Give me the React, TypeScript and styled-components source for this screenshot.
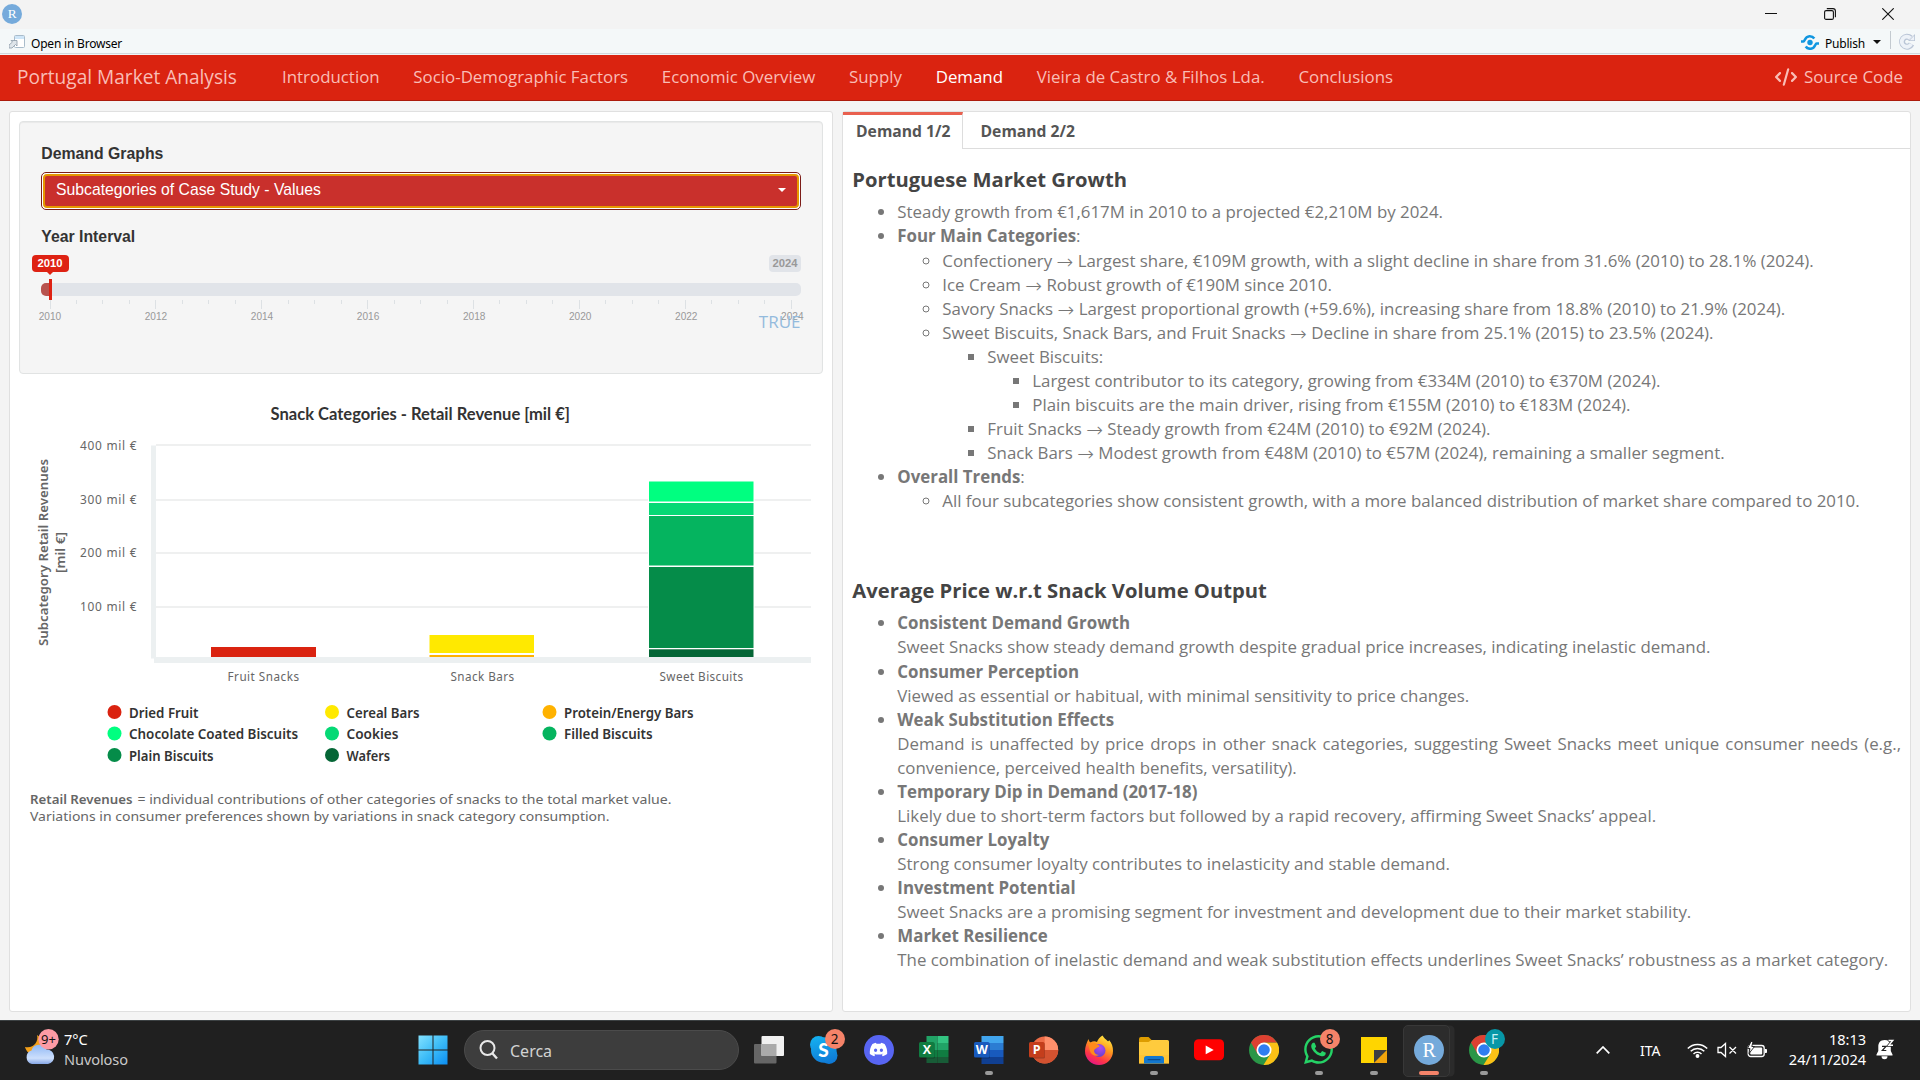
import React from "react";
import styled, { createGlobalStyle } from "styled-components";
import { FaCode, FaDiscord, FaWhatsapp } from "react-icons/fa6";

const sans = `"Open Sans", "Liberation Sans", sans-serif`;
const arial = `"Liberation Sans", Arial, sans-serif`;
const ui = `"Noto Sans", "Open Sans", sans-serif`;

const Global = createGlobalStyle`
  * { box-sizing: border-box; }
  body { margin: 0; background: #f4f4f4; font-family: ${sans}; overflow: hidden; }
`;

const Screen = styled.div`
  width: 1920px;
  height: 1080px;
  display: flex;
  flex-direction: column;
  overflow: hidden;
`;

/* ---------- window chrome ---------- */

const TitleBar = styled.div`
  height: 29px;
  flex: none;
  display: flex;
  align-items: center;
  justify-content: space-between;
  background: #f3f3f3;
  padding: 0 26px 1px 2px;
`;

const WindowButtons = styled.div`
  display: flex;
  align-items: center;
  gap: 46.5px;
`;

const ToolBar = styled.div`
  height: 26px;
  flex: none;
  display: flex;
  align-items: center;
  background: #f4f8f9;
  border-bottom: 1px solid #f0f4f6;
  box-shadow: inset 0 -1px 0 #d2d8dd;
  padding: 0 4px 0 9px;
  font-family: ${ui};
  font-size: 12px;
  color: #000;
`;

const ToolLabel = styled.span<{ $w: number }>`
  margin-left: 6px;
  padding-top: 4px;
  width: ${(p) => p.$w}px;
  white-space: nowrap;
  letter-spacing: -0.2px;
`;

const Spacer = styled.div`
  flex: 1;
`;

const Caret = styled.span<{ $c: string }>`
  border: 4px solid transparent;
  border-top-color: ${(p) => p.$c};
  border-bottom: 0;
  width: 0;
  height: 0;
`;

const Divider = styled.span`
  width: 1px;
  height: 18px;
  margin: 0 7px 4px 9px;
  background: #c3cad0;
`;

/* ---------- navbar ---------- */

const NavBar = styled.nav`
  height: 46px;
  flex: none;
  display: flex;
  align-items: center;
  background: #da2310;
  border-bottom: 1px solid #ac1b0c;
  padding: 0 17px 2px;
  color: #f9bdb6;
  font-size: 16.875px;
`;

const Brand = styled.span`
  font-size: 19.1px;
  width: 248.2px;
  white-space: nowrap;
`;

const NavItem = styled.a<{ $active?: boolean }>`
  padding: 0 16.87px;
  white-space: nowrap;
  color: ${(p) => (p.$active ? "#fff" : "inherit")};
`;

const SourceLink = styled.a`
  margin-left: auto;
  display: flex;
  align-items: center;
  gap: 7px;
  svg { width: 22px; height: 20px; }
`;

/* ---------- dashboard body ---------- */

const Body = styled.main`
  height: 919px;
  flex: none;
  display: flex;
  gap: 9px;
  padding: 10px 9px 8px;
  background: #f4f4f4;
`;

const Panel = styled.section<{ $w: number }>`
  width: ${(p) => p.$w}px;
  height: 901px;
  background: #fff;
  border: 1px solid #e0e0e0;
  border-radius: 3px;
`;

const Well = styled.div`
  margin: 9px 9px 0;
  height: 253px;
  padding: 18.5px 21px 0 20.5px;
  background: #f5f5f5;
  border: 1px solid #e1e3e3;
  border-radius: 4px;
  box-shadow: inset 0 1px 1px rgba(0, 0, 0, 0.05);
  font-family: ${arial};
`;

const FieldLabel = styled.div`
  height: 24px;
  line-height: 26px;
  margin-left: 0.8px;
  font-size: 15.8px;
  font-weight: 700;
  color: #333;
`;

const Select = styled.div`
  margin-top: 7px;
  margin-bottom: 14.5px;
  height: 38px;
  border: 1px solid #7c1c18;
  border-radius: 5px;
  background: #fff;
  padding: 1px;
`;

const SelectInner = styled.div`
  height: 100%;
  display: flex;
  align-items: center;
  justify-content: space-between;
  padding: 0 11px 2px 11.5px;
  border: 2px solid #e59700;
  border-radius: 4px;
  background: #c9302c;
  color: #fff;
  font-size: 15.75px;
`;

const Slider = styled.div`
  position: relative;
  padding-top: 7px;
  display: flex;
  flex-direction: column;
`;

const BadgeRow = styled.div`
  display: flex;
  justify-content: space-between;
  margin-left: -9px;
`;

const YearBadge = styled.div<{ $on?: boolean }>`
  position: relative;
  height: 17px;
  line-height: 17px;
  width: ${(p) => (p.$on ? 37 : 32)}px;
  text-align: center;
  font-size: 11.25px;
  font-weight: 700;
  border-radius: 4px;
  color: ${(p) => (p.$on ? "#fff" : "#999")};
  background: ${(p) => (p.$on ? "#de2213" : "#e1e4e9")};
  &::after {
    content: "";
    display: ${(p) => (p.$on ? "block" : "none")};
    position: absolute;
    left: 15px;
    top: 17px;
    border: 3px solid transparent;
    border-top-color: #de2213;
    border-bottom: 0;
  }
`;

const Track = styled.div`
  position: relative;
  margin-top: 11px;
  height: 13px;
  border-radius: 5px;
  background: linear-gradient(90deg, #b8534e 9px, #e1e4e9 9px);
`;

const Handle = styled.div`
  position: absolute;
  left: 8px;
  top: -4px;
  width: 3px;
  height: 21px;
  background: #de2213;
`;

const Ticks = styled.div`
  display: flex;
  justify-content: space-between;
  margin: 4px 9px 0;
`;

const Tick = styled.div<{ $major: boolean }>`
  width: 1px;
  height: ${(p) => (p.$major ? 9 : 4)}px;
  background: #dde1e4;
`;

const TickLabels = styled.div`
  display: flex;
  justify-content: space-between;
  margin: 2px 8.6px 0 9.4px;
  font-size: 10.1px;
  line-height: 12px;
  color: #999;
  span { width: 0; display: flex; justify-content: center; }
`;

const Flag = styled.div`
  position: absolute;
  right: 0.5px;
  top: 62px;
  font-family: ${sans};
  font-size: 17px;
  line-height: 24px;
  color: #94bbdd;
`;

const Chart = styled.svg`
  display: block;
  text { font-family: "Noto Sans", sans-serif; }
`;

const TabBar = styled.div`
  height: 37px;
  display: flex;
  &::after {
    content: "";
    flex: 1;
    border-bottom: 1px solid #ddd;
  }
`;

const Tab = styled.div<{ $active?: boolean }>`
  width: ${(p) => (p.$active ? 120 : 130)}px;
  padding: ${(p) => (p.$active ? "3px 0 0 13px" : "6px 0 0 17.5px")};
  line-height: 27px;
  font-size: 15.7px;
  font-weight: 700;
  color: #555;
  border-top: ${(p) => (p.$active ? "3px solid #e9604f" : "0")};
  border-right: ${(p) => (p.$active ? "1px solid #ddd" : "0")};
  border-bottom: ${(p) => (p.$active ? "0" : "1px solid #ddd")};
`;

const Article = styled.div`
  padding: 19px 9px 0 9.3px;
  font-size: 16.86px;
  line-height: 24.08px;
  color: #777;
`;

const Heading = styled.h4<{ $top?: number }>`
  margin: ${(p) => p.$top || 0}px 0 10.4px;
  font-size: 20.2px;
  line-height: 22px;
  font-weight: 700;
  color: #444;
`;

const List = styled.ul<{ $mark?: string; $justify?: boolean }>`
  margin: 0;
  padding-left: 45px;
  list-style-type: ${(p) => p.$mark || "disc"};
  text-align: ${(p) => (p.$justify ? "justify" : "left")};
  strong { font-weight: 700; }
`;

const ArrowGlyph = styled.span`
  font-family: "DejaVu Sans", sans-serif;
  font-weight: 200;
  font-size: 20px;
  line-height: 0;
  vertical-align: -1.5px;
`;

const Arrow = () => <ArrowGlyph>→</ArrowGlyph>;

/* ---------- taskbar ---------- */

const TaskBar = styled.footer`
  height: 60px;
  flex: none;
  display: flex;
  align-items: center;
  background: #202020;
  border-top: 1px solid #3c4143;
  padding-bottom: 2px;
  color: #fff;
  font-family: ${ui};
  font-size: 14.6px;
  line-height: 20px;
`;

const Weather = styled.div`
  width: 416.5px;
  padding-left: 22px;
  display: flex;
  align-items: center;
  gap: 4px;
`;

const WeatherText = styled.div`
  padding-bottom: 1px;
  letter-spacing: -0.1px;
`;

const Muted = styled.div`
  color: #c9c9c9;
`;

const SearchBox = styled.div`
  width: 275px;
  height: 40px;
  margin: 0 2px 0 15.5px;
  padding-left: 14px;
  display: flex;
  align-items: center;
  gap: 12px;
  border-radius: 20px;
  background: #3d3d3d;
  border: 1px solid #4b4b4b;
  font-size: 16px;
  color: #d2d2d2;
`;

const SearchText = styled.span`
  padding-top: 2px;
`;

const Slot = styled.div<{ $boxed?: boolean }>`
  position: relative;
  width: 55px;
  height: 50px;
  display: flex;
  align-items: center;
  justify-content: center;
  &::before {
    content: "";
    display: ${(p) => (p.$boxed ? "block" : "none")};
    position: absolute;
    left: 2px;
    top: 0;
    width: 45px;
    height: 50px;
    border-radius: 5px;
    border: 1px solid #383838;
    background: #2c2c2c;
    box-shadow: 5px 0 0 -0.5px #2b2b2b;
  }
  svg { position: relative; display: block; }
`;

const Indicator = styled.span<{ $wide?: boolean }>`
  position: absolute;
  bottom: 0;
  left: ${(p) => (p.$wide ? 17.5 : 23.5)}px;
  width: ${(p) => (p.$wide ? 20 : 8)}px;
  height: 4px;
  border-radius: 2px;
  background: ${(p) => (p.$wide ? "#f58369" : "#9a9a9a")};
`;

const Count = styled.span<{ $bg: string; $fg: string }>`
  position: absolute;
  left: 28.5px;
  top: 4px;
  width: 20px;
  height: 20px;
  border-radius: 50%;
  text-align: center;
  font-size: 13.5px;
  line-height: 20px;
  color: ${(p) => p.$fg};
  background: ${(p) => p.$bg};
`;

const WhatsAppIcon = styled(FaWhatsapp)`
  width: 33px;
  height: 33px;
  color: #25d366;
`;

const DiscordDisc = styled.span`
  width: 30px;
  height: 30px;
  border-radius: 50%;
  background: #5865f2;
  color: #fff;
  display: flex;
  align-items: center;
  justify-content: center;
  svg { width: 19px; height: 19px; }
`;

const Tray = styled.div`
  margin-left: auto;
  margin-right: 25px;
  display: flex;
  align-items: center;
`;

const Lang = styled.span`
  margin: 0 26px 0 30px;
  padding-top: 2px;
  width: 21px;
  font-size: 14px;
`;

const StatusIcons = styled.div`
  display: flex;
  align-items: center;
  gap: 9px;
`;

const Clock = styled.div`
  width: 98px;
  margin-right: 10px;
  padding-bottom: 1px;
  text-align: right;
  font-size: 14.6px;
  letter-spacing: -0.05px;
`;

/* ---------- icons ---------- */

const RBadge = ({ size }: { size: number }) => (
  <svg width={size} height={size} viewBox="0 0 30 30">
    <circle cx="15" cy="15" r="15" fill="#75aadb" />
    <text x="15.2" y="21.5" fontFamily="Liberation Serif, serif" fontSize="20" fill="#fff" textAnchor="middle">R</text>
  </svg>
);

const OfficeIcon = ({ letter, colors, tile, round }: { letter: string; colors: string[]; tile: string; round?: boolean }) => (
  <svg width="30" height="30" viewBox="0 0 30 30">
    {round ? (
      <>
        <circle cx="15.7" cy="15" r="13.5" fill={colors[0]} />
        <path d="M15.7 1.5A13.5 13.5 0 0 1 29.2 15H15.7Z" fill={colors[1]} />
        <path d="M2.2 15H29.2A13.5 13.5 0 0 1 2.2 15Z" fill={colors[2]} />
      </>
    ) : (
      colors.map((c, i) =>
        colors.length === 4 ? (
          <rect key={i} x="7.5" y={1 + i * 7} width="22" height="7" fill={c} />
        ) : (
          <rect key={i} x={i % 2 ? 18.5 : 7.5} y={1 + Math.floor(i / 2) * 7} width="11" height={i > 5 ? 6 : 7} fill={c} />
        )
      )
    )}
    <rect x="1" y="8" width="15" height="15.5" rx="1.5" fill="#000" opacity=".25" />
    <rect x="0" y="7" width="15.5" height="15.5" rx="1.5" fill={tile} />
    <text x="7.8" y="19.2" fontFamily="Open Sans, sans-serif" fontWeight="700" fontSize="12.5" fill="#fff" textAnchor="middle">{letter}</text>
  </svg>
);

const ChromeIcon = () => (
  <svg width="30" height="30" viewBox="0 0 30 30">
    <circle cx="15" cy="15" r="15" fill="#2a9647" />
    <path d="M15 7.5H28A15 15 0 0 1 14.5 30L21.5 18.7Z" fill="#fbc116" />
    <path d="M2 7.5A15 15 0 0 1 28 7.5H15L8.5 18.7Z" fill="#dd4031" />
    <circle cx="15" cy="15" r="7.5" fill="#fff" />
    <circle cx="15" cy="15" r="5.8" fill="#2f7df0" />
  </svg>
);

const FirefoxIcon = () => (
  <svg width="30" height="30" viewBox="0 0 30 30">
    <defs>
      <linearGradient id="ff" x1=".8" y1="0" x2=".3" y2="1">
        <stop offset="0" stopColor="#fff044" />
        <stop offset=".4" stopColor="#ff9a1f" />
        <stop offset=".75" stopColor="#ff3647" />
        <stop offset="1" stopColor="#e31587" />
      </linearGradient>
      <radialGradient id="ffc" cx=".6" cy=".3" r=".8">
        <stop offset="0" stopColor="#b04bf0" />
        <stop offset="1" stopColor="#5a40c8" />
      </radialGradient>
    </defs>
    <path d="M18.5 .5C20 3 22 4.500 23.500 6C25 7 25 5 25 5C28 8 29 12 29 16A14 14 0 0 1 1 16C1 12 2.500 8 4.500 4C5 6 5.500 7 6.500 7.500C9 6 11 6 13 7C14 4 16 2 18.500 .5Z" fill="url(#ff)" />
    <circle cx="15" cy="15.500" r="6.500" fill="url(#ffc)" />
    <path d="M4 9C7 7 11 7 13 9.500C15 10 16 11 15 12C12 12.500 12 14 10.500 14.500C9 17 12 20 15 20C12 22 7 20 6 16C5 13 5 11 4 9Z" fill="#ff8a1c" />
  </svg>
);

const FolderIcon = () => (
  <svg width="30" height="30" viewBox="0 0 30 30">
    <path d="M0 4Q0 2 2 2H9.500L12.500 5V9H0Z" fill="#dd9c00" />
    <path d="M0 7H9.500L12.500 5H28.500Q30 5 30 6.500V28.500H0Z" fill="#ffcb3d" />
    <path d="M0 20H30V28.500H0Z" fill="#ffc02e" opacity=".6" />
    <path d="M5 28.500V23.500Q5 21 7.500 21H22.500Q25 21 25 23.500V28.500Z" fill="#1378cf" />
    <rect x="8.500" y="24" width="13" height="1.300" rx=".6" fill="#0b4c8f" />
  </svg>
);

const SkypeIcon = () => (
  <svg width="30" height="30" viewBox="0 0 30 30">
    <defs>
      <linearGradient id="sk" gradientUnits="userSpaceOnUse" x1="8" y1="1" x2="16" y2="29">
        <stop offset="0" stopColor="#14b0f0" />
        <stop offset="1" stopColor="#0f7ad6" />
      </linearGradient>
    </defs>
    <circle cx="9.500" cy="9.500" r="8.500" fill="url(#sk)" />
    <circle cx="20" cy="20.500" r="8.500" fill="url(#sk)" />
    <circle cx="14.800" cy="15" r="12.800" fill="url(#sk)" />
    <text x="14.500" y="21.500" fontFamily="Lato, sans-serif" fontWeight="900" fontSize="19" fill="#fff" textAnchor="middle">S</text>
  </svg>
);

const WeatherIcon = () => (
  <svg width="38" height="42" viewBox="0 0 38 42">
    <defs>
      <linearGradient id="cl" x1="0" y1="0" x2="0" y2="1">
        <stop offset="0" stopColor="#8fb8f5" />
        <stop offset=".7" stopColor="#cddffc" />
        <stop offset="1" stopColor="#86a7e6" />
      </linearGradient>
    </defs>
    <path d="M15 6C17 13 11 20 3 18C5 26 14 28 19 23C23 18 21 9 15 6Z" fill="#f5a11a" />
    <path d="M10 35A7 7 0 0 1 9.500 21.500A8 8 0 0 1 24.500 20.500A7.300 7.300 0 0 1 26 35Z" fill="url(#cl)" />
    <circle cx="26.500" cy="10.300" r="10.200" fill="#fd9ba5" />
    <text x="26.500" y="15" fontFamily="Noto Sans, sans-serif" fontSize="13" fill="#111" textAnchor="middle">9+</text>
  </svg>
);

const BellIcon = () => (
  <svg width="19" height="21" viewBox="0 0 19 21">
    <path d="M8.500 1C4.500 1 2.300 3.800 2.300 7.500V12L.5 15.500V16.500H16.500V15.500L14.800 12V6A6.300 6.300 0 0 0 8.500 1Z" fill="#fff" />
    <path d="M5.500 17.300H11.500A3 3 0 0 1 5.500 17.300Z" fill="#fff" />
    <path d="M6 7.300H10L6.300 11.500H10.300" fill="none" stroke="#202020" strokeWidth="1.200" />
    <path d="M12.500 1.500H16.800L12.800 6.300H17" fill="none" stroke="#202020" strokeWidth="2.800" />
    <path d="M12.500 1.500H16.800L12.800 6.300H17" fill="none" stroke="#fff" strokeWidth="1.400" />
  </svg>
);

/* ---------- chart ---------- */

const BARS = [
  { x: 211, w: 105, y: 647, h: 10, c: "#da2310" },
  { x: 429.5, w: 104.5, y: 635, h: 18, c: "#ffe900" },
  { x: 429.5, w: 104.5, y: 655, h: 2, c: "#ffb200" },
  { x: 649, w: 104.5, y: 481.5, h: 20, c: "#00ff80" },
  { x: 649, w: 104.5, y: 503, h: 12, c: "#05d975" },
  { x: 649, w: 104.5, y: 516, h: 49.500, c: "#05b45f" },
  { x: 649, w: 104.5, y: 567, h: 81, c: "#058c49" },
  { x: 649, w: 104.5, y: 649.300, h: 8, c: "#056636" },
];

const LEGEND = [
  { t: "Dried Fruit", x: 114.500, y: 712, w: 69.500, c: "#da2310" },
  { t: "Cereal Bars", x: 332, y: 712, w: 73, c: "#ffe900" },
  { t: "Protein/Energy Bars", x: 549.500, y: 712, w: 129.500, c: "#ffb200" },
  { t: "Chocolate Coated Biscuits", x: 114.500, y: 733.500, w: 169, c: "#00ff80" },
  { t: "Cookies", x: 332, y: 733.500, w: 52, c: "#05d975" },
  { t: "Filled Biscuits", x: 549.500, y: 733.500, w: 88.500, c: "#05b45f" },
  { t: "Plain Biscuits", x: 114.500, y: 755, w: 84.500, c: "#058c49" },
  { t: "Wafers", x: 332, y: 755, w: 43.500, c: "#056636" },
];

const RevenueChart = () => (
  <Chart width="822" height="470" viewBox="10 374 822 470">
    <text x="270.500" y="420" textLength="299.500" lengthAdjust="spacingAndGlyphs" fontSize="16.900" fontWeight="700" fill="#333" style={{ fontFamily: "Lato" }}>
      Snack Categories - Retail Revenue [mil €]
    </text>
    {[444, 499, 552, 606].map((y, i) => (
      <g key={y}>
        <rect x="156" y={y} width="655" height="2" fill="#eff0f0" />
        <text x="80" y={[450, 504, 557, 611][i]} textLength="56.500" fontSize="11.900" fill="#666">{`${400 - i * 100} mil €`}</text>
      </g>
    ))}
    <rect x="151" y="445.500" width="5" height="213" fill="#ecf0f1" />
    <rect x="648" y="480.500" width="106.500" height="177" fill="#fff" />
    {BARS.map((b, i) => (
      <rect key={i} x={b.x} y={b.y} width={b.w} height={b.h} fill={b.c} />
    ))}
    <rect x="154" y="657" width="657" height="6" fill="#ecf0f1" />
    <g fontSize="12.800" fontWeight="600" fill="#666">
      <text transform="translate(48 646) rotate(-90)" textLength="187" lengthAdjust="spacingAndGlyphs">Subcategory Retail Revenues</text>
      <text transform="translate(64.500 573) rotate(-90)" textLength="41" lengthAdjust="spacingAndGlyphs">[mil €]</text>
    </g>
    <g fontSize="11.700" fill="#666">
      <text x="227.500" y="681" textLength="71.500">Fruit Snacks</text>
      <text x="450.500" y="681" textLength="63.500">Snack Bars</text>
      <text x="659.500" y="681" textLength="83.500">Sweet Biscuits</text>
    </g>
    {LEGEND.map((l) => (
      <g key={l.t}>
        <circle cx={l.x} cy={l.y} r="7" fill={l.c} />
        <text x={l.x + 14.500} y={Math.floor(l.y) + 6} textLength={l.w} lengthAdjust="spacingAndGlyphs" fontSize="13.400" fontWeight="600" fill="#333">{l.t}</text>
      </g>
    ))}
    <g fontSize="13.300" fill="#666">
      <text x="30" y="804" fontWeight="600" textLength="102.500" lengthAdjust="spacingAndGlyphs">Retail Revenues</text>
      <text x="137.500" y="804" textLength="534" lengthAdjust="spacingAndGlyphs">= individual contributions of other categories of snacks to the total market value.</text>
      <text x="30" y="821" textLength="579.500" lengthAdjust="spacingAndGlyphs">Variations in consumer preferences shown by variations in snack category consumption.</text>
    </g>
  </Chart>
);

const NAV = ["Introduction", "Socio-Demographic Factors", "Economic Overview", "Supply", "Demand", "Vieira de Castro & Filhos Lda.", "Conclusions"];

const DEMAND_NOTES = [
  ["Consistent Demand Growth", "Sweet Snacks show steady demand growth despite gradual price increases, indicating inelastic demand."],
  ["Consumer Perception", "Viewed as essential or habitual, with minimal sensitivity to price changes."],
  ["Weak Substitution Effects", "Demand is unaffected by price drops in other snack categories, suggesting Sweet Snacks meet unique consumer needs (e.g., convenience, perceived health benefits, versatility)."],
  ["Temporary Dip in Demand (2017-18)", "Likely due to short-term factors but followed by a rapid recovery, affirming Sweet Snacks’ appeal."],
  ["Consumer Loyalty", "Strong consumer loyalty contributes to inelasticity and stable demand."],
  ["Investment Potential", "Sweet Snacks are a promising segment for investment and development due to their market stability."],
  ["Market Resilience", "The combination of inelastic demand and weak substitution effects underlines Sweet Snacks’ robustness as a market category."],
];

export default function App() {
  return (
    <Screen>
      <Global />
      <TitleBar>
        <RBadge size={20} />
        <WindowButtons>
          <svg width="12" height="12" viewBox="0 0 12 12"><path d="M0 5.500H12" stroke="#111" strokeWidth="1" /></svg>
          <svg width="12" height="12" viewBox="0 0 12 12" fill="none" stroke="#111" strokeWidth="1.100">
            <rect x=".6" y="2.600" width="8.800" height="8.800" rx="1.500" />
            <path d="M2.800 .6H9Q11.400 .6 11.400 3V9.200" />
          </svg>
          <svg width="12" height="12" viewBox="0 0 12 12"><path d="M.3 .3L11.700 11.700M11.700 .3L.3 11.700" stroke="#111" strokeWidth="1.100" /></svg>
        </WindowButtons>
      </TitleBar>
      <ToolBar>
        <svg width="16" height="14" viewBox="0 0 16 14">
          <rect x="5.500" y=".5" width="10" height="12" rx="1" fill="#fff" stroke="#a9bccb" />
          <rect x="6" y="1" width="9" height="3" fill="#cfe6f8" />
          <path d="M0 13V10L3.500 7L2 5.500H8V11L6.500 9.500L3 13Z" fill="#dfe5ea" stroke="#8b9aa8" strokeWidth=".8" />
        </svg>
        <ToolLabel $w={110}>Open in Browser</ToolLabel>
        <Spacer />
        <svg width="18" height="16" viewBox="0 0 18 16">
          <circle cx="9" cy="8.500" r="2.700" fill="#1096e0" />
          <path d="M0 7.500H2.500C4 7.500 3.500 2.500 8.500 2.200C11 2.100 12.500 3.300 13.300 4.500M18 9.500H15.500C14 9.500 14.500 14.500 9.500 14.800C7 14.900 5.500 13.700 4.700 12.500" fill="none" stroke="#1096e0" strokeWidth="2.500" />
        </svg>
        <ToolLabel $w={48}>Publish</ToolLabel>
        <Caret $c="#111" />
        <Divider />
        <svg width="18" height="18" viewBox="0 0 18 18">
          <path d="M12.500 5A5 5 0 1 0 13.500 11" fill="none" stroke="#b9c5d6" strokeWidth="6" />
          <path d="M10 8H17V1Z" fill="#b9c5d6" />
          <path d="M12.300 5.200A5 5 0 1 0 13.200 11" fill="none" stroke="#edf2f8" strokeWidth="3.800" />
          <path d="M11.800 7.200H16.200V2.800Z" fill="#edf2f8" />
        </svg>
      </ToolBar>
      <NavBar>
        <Brand>Portugal Market Analysis</Brand>
        {NAV.map((n) => (
          <NavItem key={n} $active={n === "Demand"}>{n}</NavItem>
        ))}
        <SourceLink><FaCode />Source Code</SourceLink>
      </NavBar>
      <Body>
        <Panel $w={824}>
          <Well>
            <FieldLabel>Demand Graphs</FieldLabel>
            <Select>
              <SelectInner>
                Subcategories of Case Study - Values
                <Caret $c="#fff" />
              </SelectInner>
            </Select>
            <FieldLabel>Year Interval</FieldLabel>
            <Slider>
              <BadgeRow>
                <YearBadge $on>2010</YearBadge>
                <YearBadge>2024</YearBadge>
              </BadgeRow>
              <Track><Handle /></Track>
              <Ticks>
                {Array.from({ length: 29 }, (_, i) => <Tick key={i} $major={i % 4 === 0} />)}
              </Ticks>
              <TickLabels>
                {[2010, 2012, 2014, 2016, 2018, 2020, 2022, 2024].map((y) => <span key={y}>{y}</span>)}
              </TickLabels>
              <Flag>TRUE</Flag>
            </Slider>
          </Well>
          <RevenueChart />
        </Panel>
        <Panel $w={1069}>
          <TabBar>
            <Tab $active>Demand 1/2</Tab>
            <Tab>Demand 2/2</Tab>
          </TabBar>
          <Article>
            <Heading>Portuguese Market Growth</Heading>
            <List>
              <li>Steady growth from €1,617M in 2010 to a projected €2,210M by 2024.</li>
              <li>
                <strong>Four Main Categories</strong>:
                <List $mark="circle">
                  <li>Confectionery <Arrow /> Largest share, €109M growth, with a slight decline in share from 31.6% (2010) to 28.1% (2024).</li>
                  <li>Ice Cream <Arrow /> Robust growth of €190M since 2010.</li>
                  <li>Savory Snacks <Arrow /> Largest proportional growth (+59.6%), increasing share from 18.8% (2010) to 21.9% (2024).</li>
                  <li>
                    Sweet Biscuits, Snack Bars, and Fruit Snacks <Arrow /> Decline in share from 25.1% (2015) to 23.5% (2024).
                    <List $mark="square">
                      <li>
                        Sweet Biscuits:
                        <List $mark="square">
                          <li>Largest contributor to its category, growing from €334M (2010) to €370M (2024).</li>
                          <li>Plain biscuits are the main driver, rising from €155M (2010) to €183M (2024).</li>
                        </List>
                      </li>
                      <li>Fruit Snacks <Arrow /> Steady growth from €24M (2010) to €92M (2024).</li>
                      <li>Snack Bars <Arrow /> Modest growth from €48M (2010) to €57M (2024), remaining a smaller segment.</li>
                    </List>
                  </li>
                </List>
              </li>
              <li>
                <strong>Overall Trends</strong>:
                <List $mark="circle">
                  <li>All four subcategories show consistent growth, with a more balanced distribution of market share compared to 2010.</li>
                </List>
              </li>
            </List>
            <Heading $top={65.6}>Average Price w.r.t Snack Volume Output</Heading>
            <List $justify>
              {DEMAND_NOTES.map(([title, text]) => (
                <li key={title}><strong>{title}</strong><br />{text}</li>
              ))}
            </List>
          </Article>
        </Panel>
      </Body>
      <TaskBar>
        <Weather>
          <WeatherIcon />
          <WeatherText>
            <div>7°C</div>
            <Muted>Nuvoloso</Muted>
          </WeatherText>
        </Weather>
        <svg width="32" height="30" viewBox="0 0 32 30">
          <defs>
            <linearGradient id="win" gradientUnits="userSpaceOnUse" x1="2" y1="0" x2="31" y2="30">
              <stop offset="0" stopColor="#83e2ff" />
              <stop offset=".5" stopColor="#3cbcf8" />
              <stop offset="1" stopColor="#0a8cf2" />
            </linearGradient>
          </defs>
          <path d="M1.500 .5H15.500V14.500H1.500ZM16.500 .5H30.500V14.500H16.500ZM1.500 15.500H15.500V29.500H1.500ZM16.500 15.500H30.500V29.500H16.500Z" fill="url(#win)" />
        </svg>
        <SearchBox>
          <svg width="19" height="20" viewBox="0 0 19 20" fill="none" stroke="#e8e8e8" strokeWidth="2">
            <circle cx="8.500" cy="8" r="7" />
            <path d="M13.300 13.300L18 18.500" strokeWidth="2.400" />
          </svg>
          <SearchText>Cerca</SearchText>
        </SearchBox>
        <Slot>
          <svg width="30" height="30" viewBox="0 0 30 30">
            <rect x="0" y="9" width="22.500" height="19.500" rx="1" fill="#666" />
            <rect x="7.500" y="1" width="22.500" height="20" rx="1" fill="#f1f1f1" />
            <rect x="7.500" y="9" width="15" height="12" fill="#ababab" />
          </svg>
        </Slot>
        <Slot><SkypeIcon /><Count $bg="#f58369" $fg="#111">2</Count></Slot>
        <Slot><DiscordDisc><FaDiscord /></DiscordDisc></Slot>
        <Slot><OfficeIcon letter="X" tile="#107c41" colors={["#21a366", "#33c481", "#21a366", "#21a366", "#107c41", "#107c41", "#185c37", "#185c37"]} /></Slot>
        <Slot><OfficeIcon letter="W" tile="#185abd" colors={["#41a5ee", "#2b7cd3", "#185abd", "#103f91"]} /><Indicator /></Slot>
        <Slot><OfficeIcon letter="P" tile="#c43e1c" round colors={["#ed6c47", "#ff8f6b", "#d35230"]} /></Slot>
        <Slot><FirefoxIcon /></Slot>
        <Slot><FolderIcon /><Indicator /></Slot>
        <Slot>
          <svg width="30" height="30" viewBox="0 0 30 30">
            <rect x="0" y="4.200" width="30" height="21" rx="4.500" fill="#f00" />
            <path d="M11.700 10.500L19.700 14.900L11.700 19.300Z" fill="#fff" />
          </svg>
        </Slot>
        <Slot><ChromeIcon /></Slot>
        <Slot><WhatsAppIcon /><Count $bg="#f58369" $fg="#111">8</Count><Indicator /></Slot>
        <Slot>
          <svg width="30" height="30" viewBox="0 0 30 30">
            <path d="M2 2H28V15L15 28H2Z" fill="#ffd500" />
            <path d="M15 28V15H28Z" fill="#3f3f42" />
            <path d="M28 15V28H15Z" fill="#f2a50c" />
          </svg>
          <Indicator />
        </Slot>
        <Slot $boxed><RBadge size={30} /><Indicator $wide /></Slot>
        <Slot><ChromeIcon /><Count $bg="#0797a7" $fg="#c9f0f3">F</Count><Indicator /></Slot>
        <Tray>
          <svg width="14" height="8" viewBox="0 0 14 8"><path d="M.7 7.300L7 1L13.300 7.300" fill="none" stroke="#fff" strokeWidth="1.700" /></svg>
          <Lang>ITA</Lang>
          <StatusIcons>
            <svg width="21" height="16" viewBox="0 0 21 16" fill="none" stroke="#fff" strokeWidth="1.500">
              <path d="M.8 6.500A13.500 13.500 0 0 1 20.200 6.500M3.700 9.300A9.600 9.600 0 0 1 17.300 9.300M6.500 12A5.700 5.700 0 0 1 14.500 12" />
              <circle cx="10.500" cy="14" r="1.200" fill="#fff" />
            </svg>
            <svg width="21" height="16" viewBox="0 0 21 16" fill="none" stroke="#fff" strokeWidth="1.300">
              <path d="M1 5.500H4L8.500 1.500V14.500L4 10.500H1ZM12.500 5L19 11.500M19 5L12.500 11.500" />
            </svg>
            <svg width="21" height="18" viewBox="0 0 21 18">
              <rect x="1.200" y="4.500" width="16" height="11" rx="2.500" fill="none" stroke="#fff" strokeWidth="1.300" />
              <rect x="3.200" y="6.500" width="12" height="7" rx="1" fill="#fff" />
              <path d="M18 8H19.200Q20 8 20 9V11Q20 12 19.200 12H18Z" fill="#fff" />
              <path d="M4 .5L.5 7.500H3L2 12.500L7.500 5.500H4.800L6 .5Z" fill="#fff" stroke="#202020" strokeWidth=".9" />
            </svg>
          </StatusIcons>
          <Clock>
            <div>18:13</div>
            <div>24/11/2024</div>
          </Clock>
          <BellIcon />
        </Tray>
      </TaskBar>
    </Screen>
  );
}
